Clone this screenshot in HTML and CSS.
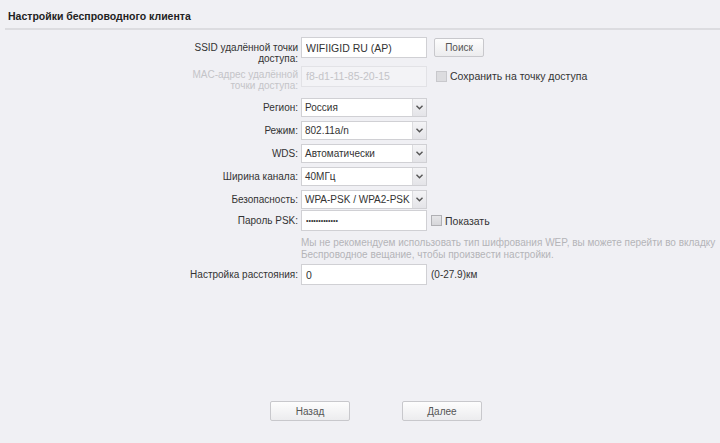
FILE: index.html
```html
<!DOCTYPE html>
<html lang="ru">
<head>
  <meta charset="UTF-8" />
  <title>Настройки беспроводного клиента</title>
  <link rel="stylesheet" href="styles.css">
</head>
<body>

  <header class="page-head">
    <h1>Настройки беспроводного клиента</h1>
  </header>

  <form class="settings">
    <div class="row row-ssid">
      <label class="lbl">SSID удалённой точки доступа:</label>
      <div class="ctl">
        <input class="field" type="text" value="WIFIIGID RU (AP)">
        <button type="button" class="btn btn-search">Поиск</button>
      </div>
    </div>

    <div class="row row-mac">
      <label class="lbl lbl-off">MAC-адрес удалённой точки доступа:</label>
      <div class="ctl">
        <input class="field" type="text" value="f8-d1-11-85-20-15" disabled>
        <span class="check check-off"></span>
        <span class="check-text">Сохранить на точку доступа</span>
      </div>
    </div>

    <div class="row row-sel">
      <label class="lbl">Регион:</label>
      <div class="ctl">
        <div class="select"><span class="sel-val">Россия</span><span class="sel-arrow"><svg width="7" height="5" viewBox="0 0 7 5"><path d="M0.5 0.8 L3.5 3.8 L6.5 0.8" fill="none" stroke="#555" stroke-width="1.4"/></svg></span></div>
      </div>
    </div>

    <div class="row row-sel">
      <label class="lbl">Режим:</label>
      <div class="ctl">
        <div class="select"><span class="sel-val">802.11a/n</span><span class="sel-arrow"><svg width="7" height="5" viewBox="0 0 7 5"><path d="M0.5 0.8 L3.5 3.8 L6.5 0.8" fill="none" stroke="#555" stroke-width="1.4"/></svg></span></div>
      </div>
    </div>

    <div class="row row-sel">
      <label class="lbl">WDS:</label>
      <div class="ctl">
        <div class="select"><span class="sel-val">Автоматически</span><span class="sel-arrow"><svg width="7" height="5" viewBox="0 0 7 5"><path d="M0.5 0.8 L3.5 3.8 L6.5 0.8" fill="none" stroke="#555" stroke-width="1.4"/></svg></span></div>
      </div>
    </div>

    <div class="row row-sel">
      <label class="lbl">Ширина канала:</label>
      <div class="ctl">
        <div class="select"><span class="sel-val">40МГц</span><span class="sel-arrow"><svg width="7" height="5" viewBox="0 0 7 5"><path d="M0.5 0.8 L3.5 3.8 L6.5 0.8" fill="none" stroke="#555" stroke-width="1.4"/></svg></span></div>
      </div>
    </div>

    <div class="row row-sel">
      <label class="lbl">Безопасность:</label>
      <div class="ctl">
        <div class="select"><span class="sel-val">WPA-PSK / WPA2-PSK</span><span class="sel-arrow"><svg width="7" height="5" viewBox="0 0 7 5"><path d="M0.5 0.8 L3.5 3.8 L6.5 0.8" fill="none" stroke="#555" stroke-width="1.4"/></svg></span></div>
      </div>
    </div>

    <div class="row row-psk">
      <label class="lbl">Пароль PSK:</label>
      <div class="ctl">
        <input class="field field-pass" type="text" value="•••••••••••••">
        <span class="check"></span>
        <span class="check-text">Показать</span>
      </div>
    </div>

    <div class="row row-note">
      <span class="lbl"></span>
      <p class="note">Мы не рекомендуем использовать тип шифрования WEP, вы можете перейти во вкладку Беспроводное вещание, чтобы произвести настройки.</p>
    </div>

    <div class="row row-dist">
      <label class="lbl">Настройка расстояния:</label>
      <div class="ctl">
        <input class="field" type="text" value="0">
        <span class="unit">(0-27.9)км</span>
      </div>
    </div>
  </form>

  <div class="actions">
    <button type="button" class="btn btn-nav">Назад</button>
    <button type="button" class="btn btn-nav">Далее</button>
  </div>

</body>
</html>
```

FILE: styles.css
```css
* {
  margin: 0;
  padding: 0;
  box-sizing: border-box;
}
body {
  font-family: 'Liberation Sans', Arial, sans-serif;
  font-size: 10px;
  color: #333;
  background: #f0f0f4;
  width: 720px;
  height: 443px;
  overflow: hidden;
}
.page-head {
  padding: 10px 0 0 3px;
  height: 30px;
  border-bottom: 2px solid #dcdce0;
  margin-left: 5px;
}
.page-head h1 {
  font-size: 10.5px;
  font-weight: bold;
  color: #222;
}
.settings {
  padding-top: 7px;
}
.row {
  display: flex;
  align-items: center;
}
.lbl {
  width: 120px;
  margin-left: 178px;
  margin-right: 3px;
  text-align: right;
  line-height: 11px;
  color: #333;
  flex-shrink: 0;
}
.lbl-off {
  color: #c4c4c8;
}
.ctl {
  display: flex;
  align-items: center;
}
.field {
  width: 126px;
  height: 21px;
  border: 1px solid #d0d0d4;
  background: #fff;
  font-family: inherit;
  font-size: 10.5px;
  color: #333;
  padding: 0 4px;
  outline: none;
}
.field:disabled {
  background: #f3f3f6;
  border-color: #e2e2e6;
  color: #c4c4c8;
}
.field-pass {
  font-size: 7px;
  letter-spacing: 0;
}
.row-ssid {
  height: 22px;
  align-items: flex-start;
}
.row-ssid .lbl {
  padding-top: 5px;
}
.row-mac {
  margin-top: 7px;
  align-items: flex-start;
}
.row-mac .lbl {
  padding-top: 3px;
}
.row-mac .ctl {
  height: 20px;
}
.btn {
  font-family: inherit;
  font-size: 10px;
  color: #555;
  background: linear-gradient(#fdfdfd, #ececee);
  border: 1px solid #c8c8cc;
  border-radius: 2px;
}
.btn-search {
  width: 50px;
  height: 19px;
  margin-left: 7px;
}
.check {
  width: 11px;
  height: 11px;
  border: 1px solid #b0b0b4;
  background: linear-gradient(#e6e6e8, #d6d6da);
  margin-left: 9px;
  margin-right: 3px;
}
.check-off {
  border-color: #c8c8cc;
  background: #dcdcdf;
}
.check-text {
  color: #333;
  font-size: 10.5px;
}
.row-sel {
  margin-top: 4px;
}
.row-mac + .row-sel {
  margin-top: 7px;
}
.select {
  display: flex;
  width: 126px;
  height: 19px;
  border: 1px solid #d0d0d4;
  background: #fff;
}
.sel-val {
  flex: 1;
  padding: 3px 0 0 3px;
  font-size: 10px;
  white-space: nowrap;
  overflow: hidden;
}
.sel-arrow {
  width: 14px;
  border-left: 1px solid #dcdcdf;
  background: linear-gradient(#f4f4f6, #e4e4e8);
  display: flex;
  align-items: center;
  justify-content: center;
}
.row-psk {
  margin-top: 1px;
}
.row-psk .check {
  margin-left: 4px;
}
.row-note {
  margin-top: 6px;
  align-items: flex-start;
}
.note {
  color: #b4b4b8;
  line-height: 12px;
  width: 420px;
}
.row-dist {
  margin-top: 3px;
}
.unit {
  margin-left: 4px;
}
.actions {
  display: flex;
  gap: 52px;
  margin-top: 116px;
  margin-left: 270px;
}
.btn-nav {
  width: 80px;
  height: 20px;
}
```
